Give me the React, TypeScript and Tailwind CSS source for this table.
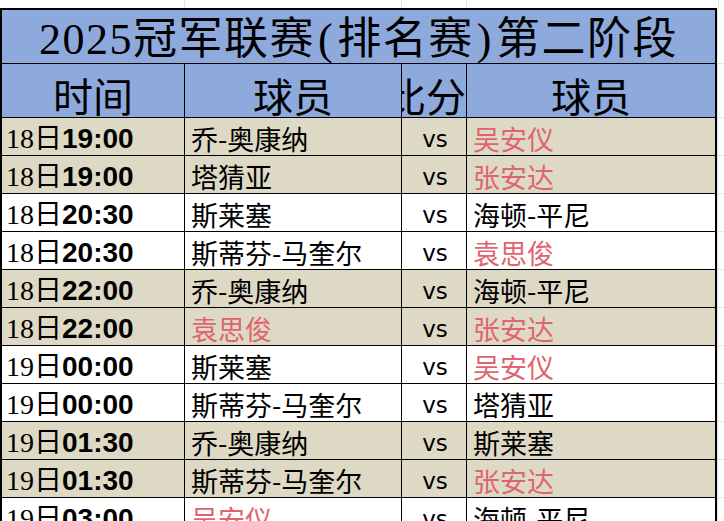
const RED = "text-[#e0646f]";

type Row = {
  day: string;
  time: string;
  p1: string;
  p1Red?: boolean;
  p2: string;
  p2Red?: boolean;
  tan: boolean;
};

const rows: Row[] = [
  { day: "18日", time: "19:00", p1: "乔-奥康纳", p2: "吴安仪", p2Red: true, tan: true },
  { day: "18日", time: "19:00", p1: "塔猜亚", p2: "张安达", p2Red: true, tan: true },
  { day: "18日", time: "20:30", p1: "斯莱塞", p2: "海顿-平尼", tan: false },
  { day: "18日", time: "20:30", p1: "斯蒂芬-马奎尔", p2: "袁思俊", p2Red: true, tan: false },
  { day: "18日", time: "22:00", p1: "乔-奥康纳", p2: "海顿-平尼", tan: true },
  { day: "18日", time: "22:00", p1: "袁思俊", p1Red: true, p2: "张安达", p2Red: true, tan: true },
  { day: "19日", time: "00:00", p1: "斯莱塞", p2: "吴安仪", p2Red: true, tan: false },
  { day: "19日", time: "00:00", p1: "斯蒂芬-马奎尔", p2: "塔猜亚", tan: false },
  { day: "19日", time: "01:30", p1: "乔-奥康纳", p2: "斯莱塞", tan: true },
  { day: "19日", time: "01:30", p1: "斯蒂芬-马奎尔", p2: "张安达", p2Red: true, tan: true },
  { day: "19日", time: "03:00", p1: "吴安仪", p1Red: true, p2: "海顿-平尼", tan: false },
];

const serif = "font-['Liberation_Serif','Noto_Sans_CJK_SC',serif]";
const cjk = "font-['Noto_Sans_CJK_SC',sans-serif]";

function Gutter() {
  return <div className="flex-1 border-l border-b border-[#e4e4e4]" />;
}

export default function App() {
  return (
    <div className="w-[724px] h-[521px] overflow-hidden bg-white text-black">
      {/* sheet grid above the table */}
      <div className="flex h-[8px]">
        <div className="w-[185px] border-r border-[#e4e4e4]" />
        <div className="w-[217px] border-r border-[#e4e4e4]" />
        <div className="w-[65px] border-r border-[#e4e4e4]" />
        <div className="w-[252px] border-r border-[#e4e4e4]" />
      </div>

      {/* title */}
      <div className="flex h-[56px]">
        <div className="w-[717px] flex items-center justify-center pt-[6px] border-2 border-b border-black bg-[#8ea9db]">
          <span className={`${serif} text-[44px] leading-none tracking-[1.5px] whitespace-nowrap`}>
            2025冠军联赛<span className="mx-[3px]">(</span>排名赛<span className="mx-[3px]">)</span>第二阶段
          </span>
        </div>
        <Gutter />
      </div>

      {/* header */}
      <div className="flex h-[54px]">
        <div className={`w-[717px] flex border-x-2 border-b border-black bg-[#8ea9db] ${cjk} text-[40px] leading-none`}>
          <div className="w-[183px] border-r border-black flex items-center justify-center pt-[8px]">时间</div>
          <div className="w-[217px] border-r border-black flex items-center justify-center pt-[8px]">球员</div>
          <div className="w-[65px] border-r border-black flex items-center justify-end pt-[8px] overflow-hidden whitespace-nowrap">
            <span className="shrink-0">比分</span>
          </div>
          <div className="flex-1 flex items-center justify-center pt-[8px]">球员</div>
        </div>
        <Gutter />
      </div>

      {rows.map((r, i) => (
        <div key={i} className="flex h-[38px]">
          <div
            className={`w-[717px] flex border-x-2 border-b border-black ${r.tan ? "bg-[#ddd9c4]" : "bg-white"}`}
          >
            <div className="w-[183px] border-r border-black flex items-center pl-[4px] pt-[4px] whitespace-nowrap">
              <span className={`${serif} text-[28px] leading-none`}>{r.day}</span>
              <span className="font-['Liberation_Sans',sans-serif] font-bold text-[28px] leading-none">{r.time}</span>
            </div>
            <div
              className={`w-[217px] border-r border-black flex items-center pl-[6px] pt-[4px] ${cjk} text-[27px] leading-none whitespace-nowrap ${r.p1Red ? RED : ""}`}
            >
              {r.p1}
            </div>
            <div className="w-[65px] border-r border-black flex items-center justify-center pt-[5px] pl-[2px] font-['DejaVu_Sans',sans-serif] text-[23px] leading-none">
              vs
            </div>
            <div
              className={`flex-1 flex items-center pl-[6px] pt-[4px] ${cjk} text-[27px] leading-none whitespace-nowrap ${r.p2Red ? RED : ""}`}
            >
              {r.p2}
            </div>
          </div>
          <Gutter />
        </div>
      ))}
    </div>
  );
}
